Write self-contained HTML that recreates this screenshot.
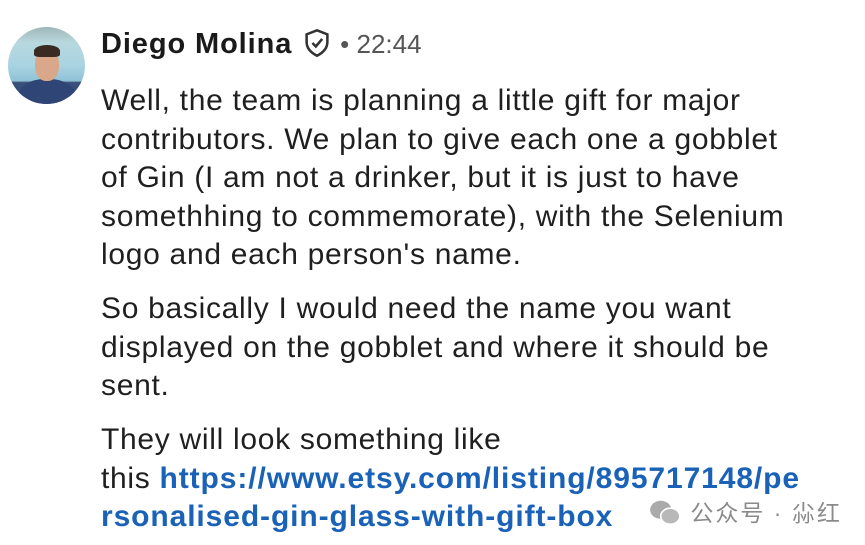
<!DOCTYPE html>
<html><head><style>
body{margin:0;width:865px;height:545px;background:#fff;position:relative;overflow:hidden;font-family:"Liberation Sans",sans-serif;color:#1f1f1f}
.av{position:absolute;left:8px;top:27px;width:77px;height:77px;border-radius:50%;background:linear-gradient(#9fb6b8 0,#b8d8de 20%,#a9d4e2 50%,#8fc2d6 70%,#3a4f7a 72%,#34497a 100%);overflow:hidden}
.face{position:absolute;left:27px;top:22px;width:24px;height:32px;border-radius:45%;background:#d9a88a}
.hair{position:absolute;left:26px;top:18px;width:26px;height:12px;border-radius:50% 50% 20% 20%;background:#3a2a22}
.body{position:absolute;left:10px;top:52px;width:58px;height:40px;border-radius:45% 45% 0 0;background:#2e4576}
.p{position:absolute;left:101px;font-size:30px;letter-spacing:0.7px;line-height:38.5px;margin:0;white-space:nowrap}
a{color:#1a62b8;font-weight:bold;text-decoration:none;letter-spacing:0.9px}
</style></head><body>
<div class="av"><div class="body"></div><div class="face"></div><div class="hair"></div></div>
<div style="position:absolute;left:101px;top:28px;font-size:29px;letter-spacing:0.9px;font-weight:bold;color:#1a1a1a;white-space:nowrap">Diego Molina
<svg width="28" height="30" viewBox="0 0 24 26" style="vertical-align:-5px;margin-left:2px"><path d="M12 2 L21 5.5 V12 C21 18 17 21.5 12 24 C7 21.5 3 18 3 12 V5.5 Z" fill="none" stroke="#333" stroke-width="2.2"/><path d="M8 13 L11 16 L16.5 9.5" fill="none" stroke="#333" stroke-width="2.2"/></svg>
<span style="font-weight:normal;color:#555;font-size:26px;letter-spacing:0"> • 22:44</span></div>
<div class="p" style="top:82px">Well, the team is planning a little gift for major<br>contributors. We plan to give each one a gobblet<br>of Gin (I am not a drinker, but it is just to have<br>somethhing to commemorate), with the Selenium<br>logo and each person's name.</div>
<div class="p" style="top:290px">So basically I would need the name you want<br>displayed on the gobblet and where it should be<br>sent.</div>
<div class="p" style="top:421px">They will look something like<br>this <a>https://www.etsy.com/listing/895717148/pe</a><br><a>rsonalised-gin-glass-with-gift-box</a></div>
<div style="position:absolute;left:648px;top:494px;font-family:'Liberation Sans','Noto Sans CJK SC',sans-serif;font-size:23px;letter-spacing:2px;color:#8a8a8a;white-space:nowrap">
<svg width="34" height="28" viewBox="0 0 32 26" style="vertical-align:-6px"><ellipse cx="12" cy="10" rx="10" ry="8.5" fill="#aaa"/><ellipse cx="21" cy="16" rx="9" ry="7.5" fill="#b8b8b8" stroke="#fff" stroke-width="1.5"/></svg>
公众号 · 尛红</div>
</body></html>
